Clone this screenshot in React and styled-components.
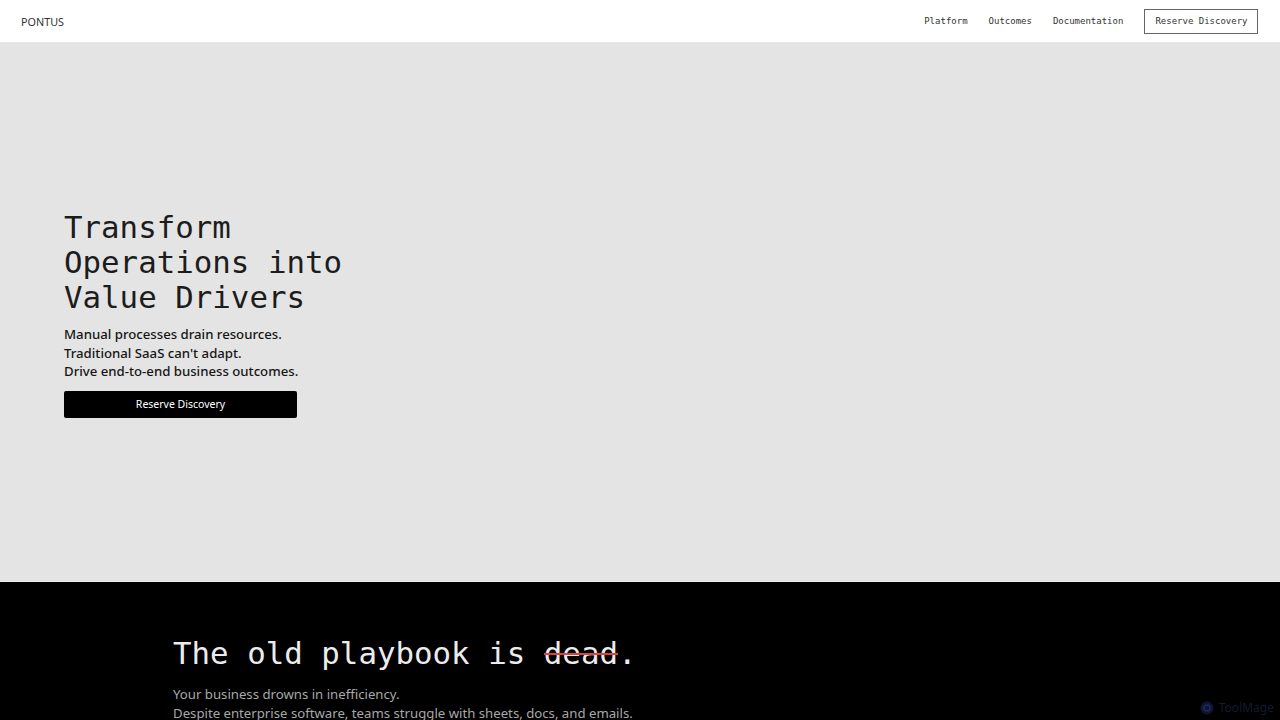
import React from "react";
import styled, {createGlobalStyle} from "styled-components";

const Mono = `"DejaVu Sans Mono", "Liberation Mono", monospace`;
const Sans = `"Noto Sans", "Open Sans", sans-serif`;

const GlobalStyle = createGlobalStyle`
	html, body {
		margin: 0;
		padding: 0;
		background: #000;
	}
	* { box-sizing: border-box; }
`;

const Page = styled.div`
	width: 1280px;
	height: 720px;
	overflow: hidden;
	position: relative;
	display: flex;
	flex-direction: column;
`;

// Barra superior
const Nav = styled.nav`
	height: 43px;
	flex-shrink: 0;
	background: #fff;
	border-bottom: 1px solid #e8e8e8;
	display: flex;
	align-items: center;
	justify-content: space-between;
	padding: 0 22px 0 21px;
`;

const Logo = styled.span`
	font-family: ${Sans};
	font-size: 10.8px;
	color: #333;
`;

const NavMenu = styled.div`
	display: flex;
	align-items: center;
	gap: 21px;
`;

const NavLink = styled.a`
	font-family: ${Mono};
	font-size: 9px;
	color: #333;
	text-decoration: none;
`;

const NavButton = styled.a`
	font-family: ${Mono};
	font-size: 9px;
	color: #333;
	text-decoration: none;
	border: 1px solid #666;
	height: 25px;
	display: flex;
	align-items: center;
	padding: 0 9.5px 0 10px;
`;

// Hero
const Hero = styled.section`
	height: 539px;
	flex-shrink: 0;
	background: #e4e4e4;
	border-bottom: 1px solid #ececec;
	display: flex;
	flex-direction: column;
	justify-content: center;
	padding: 4px 64px 0;
`;

const HeroTitle = styled.h1`
	margin: 0 0 10px;
	font-family: ${Mono};
	font-weight: 300;
	font-size: 30.8px;
	line-height: 35px;
	color: #1c1c1c;
`;

const HeroText = styled.p`
	margin: 0 0 10px;
	font-family: ${Sans};
	font-weight: 500;
	font-size: 13.2px;
	line-height: 18.5px;
	color: #161616;
`;

const PrimaryButton = styled.a`
	width: 233px;
	height: 27px;
	background: #000;
	color: #fff;
	border-radius: 2px;
	display: flex;
	align-items: center;
	justify-content: center;
	font-family: ${Sans};
	font-size: 10.5px;
	text-decoration: none;
`;

// Sección oscura
const Dark = styled.section`
	flex: 1;
	background: #000;
	padding: 51px 173px 0;
`;

const DarkTitle = styled.h2`
	margin: 0 0 12px;
	font-family: ${Mono};
	font-weight: 300;
	font-size: 30.8px;
	line-height: 40px;
	color: #ececec;
`;

const Struck = styled.span`
	position: relative;
	&::after {
		content: "";
		position: absolute;
		left: 0;
		right: 0;
		top: 50%;
		height: 2px;
		background: #d9423f;
	}
`;

const DarkText = styled.p`
	margin: 0;
	font-family: ${Sans};
	font-size: 13.2px;
	line-height: 19px;
	color: #a8a8a8;
`;

const Badge = styled.div`
	position: absolute;
	right: 6px;
	bottom: 4px;
	display: flex;
	align-items: center;
	gap: 5px;
	font-family: ${Sans};
	font-size: 12px;
	color: #141a33;
`;

export default function App() {
	return (
		<Page>
			<GlobalStyle />
			<Nav>
				<Logo>PONTUS</Logo>
				<NavMenu>
					<NavLink href="#">Platform</NavLink>
					<NavLink href="#">Outcomes</NavLink>
					<NavLink href="#">Documentation</NavLink>
					<NavButton href="#">Reserve Discovery</NavButton>
				</NavMenu>
			</Nav>
			<Hero>
				<HeroTitle>
					Transform<br />Operations into<br />Value Drivers
				</HeroTitle>
				<HeroText>
					Manual processes drain resources.<br />
					Traditional SaaS can't adapt.<br />
					Drive end-to-end business outcomes.
				</HeroText>
				<PrimaryButton href="#">Reserve Discovery</PrimaryButton>
			</Hero>
			<Dark>
				<DarkTitle>
					The old playbook is <Struck>dead</Struck>.
				</DarkTitle>
				<DarkText>
					Your business drowns in inefficiency.<br />
					Despite enterprise software, teams struggle with sheets, docs, and emails.
				</DarkText>
			</Dark>
			<Badge>
				<svg width="14" height="14" viewBox="0 0 14 14">
					<circle cx="7" cy="7" r="6.5" fill="#0e1634" />
					<circle cx="7" cy="7" r="3" fill="none" stroke="#1c2a5a" strokeWidth="1.5" />
				</svg>
				ToolMage
			</Badge>
		</Page>
	);
}
